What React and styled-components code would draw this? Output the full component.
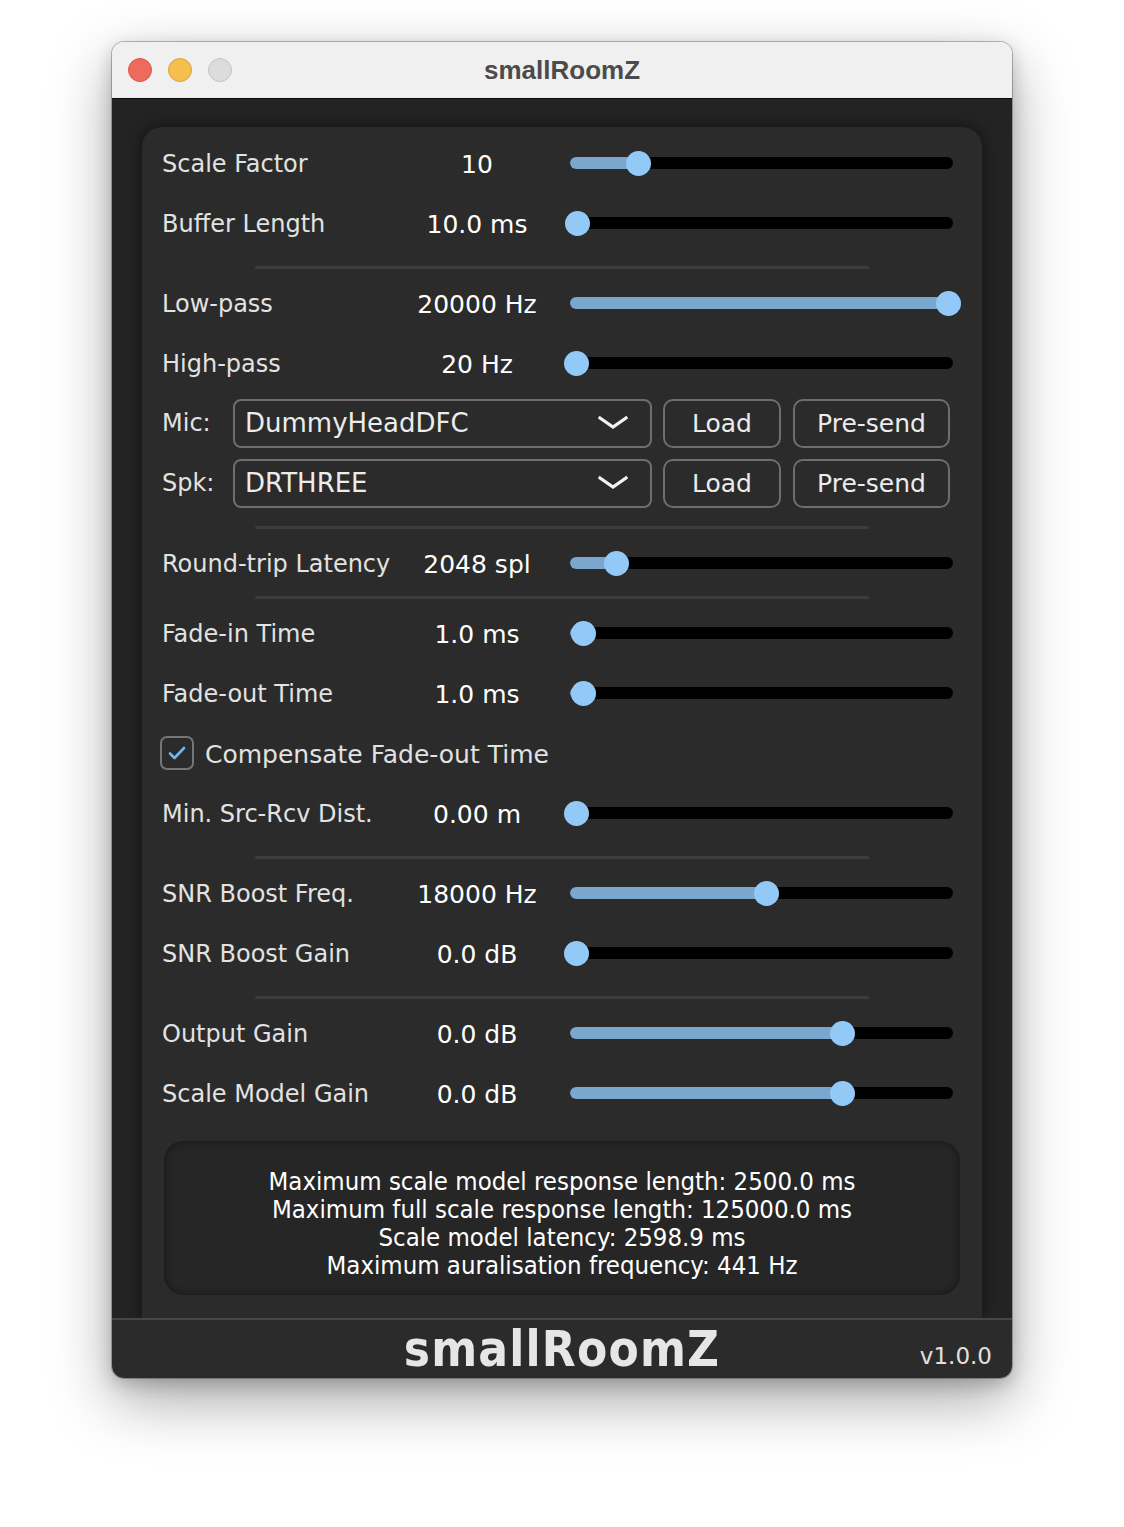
import React from "react";
import styled, { createGlobalStyle } from "styled-components";

const UI_FONT = `"DejaVu Sans", "Liberation Sans", sans-serif`;
const NARROW_FONT = `"DejaVu Sans Condensed", "Liberation Sans Narrow", "Liberation Sans", sans-serif`;

const GlobalStyle = createGlobalStyle`
  html, body {
    margin: 0;
    padding: 0;
    background: #ffffff;
  }
  body {
    font-family: ${UI_FONT};
  }
`;

const Page = styled.div`
  width: 1124px;
  height: 1527px;
  padding: 42px 0 0 112px;
  box-sizing: border-box;
`;

const Window = styled.div`
  width: 900px;
  height: 1336px;
  border-radius: 12px;
  overflow: hidden;
  display: flex;
  flex-direction: column;
  box-shadow: 0 0 0 1px rgba(0, 0, 0, 0.25), 0 22px 60px rgba(0, 0, 0, 0.35),
    0 6px 18px rgba(0, 0, 0, 0.2);
`;

const TitleBar = styled.div`
  height: 56px;
  flex: none;
  background: #f0f0f0;
  border-bottom: 1px solid #0d0d0d;
  display: flex;
  align-items: center;
  position: relative;
  padding-left: 16px;
  gap: 16px;
`;

const Light = styled.span`
  width: 24px;
  height: 24px;
  border-radius: 50%;
  box-sizing: border-box;
  background: ${(p) => p.$color};
  border: 1px solid ${(p) => p.$edge};
`;

const TitleText = styled.div`
  position: absolute;
  left: 0;
  right: 0;
  top: 0;
  bottom: 0;
  display: flex;
  align-items: center;
  justify-content: center;
  font-family: "Liberation Sans", sans-serif;
  font-weight: bold;
  font-size: 26px;
  color: #4b4b4b;
  pointer-events: none;
`;

const Body = styled.div`
  flex: 1;
  background: #232323;
  padding: 28px 30px 0;
  display: flex;
  flex-direction: column;
`;

const Panel = styled.div`
  flex: 1;
  background: #2b2b2b;
  border-radius: 20px 20px 0 0;
  box-shadow: 0 0 14px rgba(0, 0, 0, 0.55);
  padding: 6px 0 22px;
  display: flex;
  flex-direction: column;
`;

const Row = styled.div`
  height: 60px;
  display: grid;
  grid-template-columns: 230px 178px 383px;
  align-items: center;
  padding-left: 20px;
`;

const Label = styled.div`
  font-size: ${(p) => p.$size || 24}px;
  color: #e2e2e2;
  white-space: nowrap;
  padding-top: 2px;
`;

const Value = styled.div`
  font-size: 25px;
  color: #ffffff;
  text-align: center;
  white-space: nowrap;
  padding: 2px 8px 0 0;
`;

const Separator = styled.div`
  height: 3px;
  margin: ${(p) => p.$top}px 113px 4px;
  background: #3d3d3d;
  border-radius: 2px;
`;

const Track = styled.div`
  position: relative;
  height: 12px;
  border-radius: 6px;
  background: #000000;
`;

const Fill = styled.div`
  position: absolute;
  left: 0;
  top: 0;
  bottom: 0;
  border-radius: 6px;
  background: #7ba7cf;
`;

const Thumb = styled.div`
  position: absolute;
  top: 50%;
  width: 25px;
  height: 25px;
  margin: -12.5px 0 0 -12.5px;
  border-radius: 50%;
  background: #92c9f7;
`;

const Slider = ({ at }) => (
  <Track>
    <Fill style={{ width: at }} />
    <Thumb style={{ left: at }} />
  </Track>
);

const SliderRow = ({ label, value, at }) => (
  <Row>
    <Label>{label}</Label>
    <Value>{value}</Value>
    <Slider at={at} />
  </Row>
);

const ChooserRow = styled.div`
  height: 60px;
  display: flex;
  align-items: center;
  padding-left: 20px;
`;

const ChooserLabel = styled.div`
  width: 71px;
  font-size: 24px;
  color: #e2e2e2;
`;

const Combo = styled.div`
  width: 419px;
  height: 49px;
  box-sizing: border-box;
  border: 2px solid #6e6e6e;
  border-radius: 8px;
  display: flex;
  align-items: center;
  justify-content: space-between;
  padding: 0 22px 0 10px;
  font-size: 26px;
  color: #ececec;
  margin-right: 11px;
`;

const Button = styled.div`
  width: ${(p) => p.$w}px;
  height: 49px;
  box-sizing: border-box;
  border: 2px solid #6e6e6e;
  border-radius: 10px;
  display: flex;
  align-items: center;
  justify-content: center;
  font-size: 25px;
  color: #ececec;
  margin-right: 12px;
`;

const Chevron = () => (
  <svg width="30" height="16" viewBox="0 0 30 16">
    <path
      d="M2 3 L15 12 L28 3"
      fill="none"
      stroke="#f2f2f2"
      strokeWidth="3.2"
      strokeLinecap="square"
    />
  </svg>
);

const Chooser = ({ label, item }) => (
  <ChooserRow>
    <ChooserLabel>{label}</ChooserLabel>
    <Combo>
      <span>{item}</span>
      <Chevron />
    </Combo>
    <Button $w={118}>Load</Button>
    <Button $w={157}>Pre-send</Button>
  </ChooserRow>
);

const CheckRow = styled.div`
  height: 60px;
  display: flex;
  align-items: center;
  padding-left: 18px;
  gap: 11px;
`;

const Box = styled.div`
  width: 34px;
  height: 34px;
  box-sizing: border-box;
  border: 2px solid #767676;
  border-radius: 7px;
  display: flex;
  align-items: center;
  justify-content: center;
`;

const InfoBox = styled.div`
  margin: 18px 22px 0;
  height: 154px;
  border-radius: 20px;
  background: #262626;
  box-shadow: inset 0 0 8px rgba(0, 0, 0, 0.45);
  display: flex;
  flex-direction: column;
  align-items: center;
  justify-content: center;
  padding-top: 10px;
  box-sizing: border-box;
`;

const InfoLine = styled.div`
  font-family: ${NARROW_FONT};
  font-size: 25.5px;
  line-height: 28px;
  color: #ffffff;
  white-space: nowrap;
`;

const Footer = styled.div`
  height: 58px;
  flex: none;
  background: #2b2b2b;
  border-top: 2px solid #474747;
  position: relative;
  display: flex;
  align-items: center;
  justify-content: center;
`;

const Brand = styled.div`
  font-family: ${NARROW_FONT};
  font-weight: bold;
  font-size: 49px;
  letter-spacing: 1.2px;
  color: #e6e6e6;
  line-height: 54px;
  margin-top: 2px;
`;

const Version = styled.div`
  position: absolute;
  right: 20px;
  bottom: 9px;
  font-size: 23px;
  color: #e0e0e0;
`;

// thumb centre in px along the 383px track
const pos = (c) => `${c - 570}px`;

export default function App() {
  return (
    <Page>
      <GlobalStyle />
      <Window>
        <TitleBar>
          <Light $color="#ee6a5f" $edge="#d5564b" />
          <Light $color="#f5bf4f" $edge="#d9a23a" />
          <Light $color="#dcdcdc" $edge="#c4c4c4" />
          <TitleText>smallRoomZ</TitleText>
        </TitleBar>
        <Body>
          <Panel>
            <SliderRow label="Scale Factor" value="10" at={pos(638)} />
            <SliderRow label="Buffer Length" value="10.0 ms" at={pos(577)} />
            <Separator $top={13} />
            <SliderRow label="Low-pass" value="20000 Hz" at={pos(948)} />
            <SliderRow label="High-pass" value="20 Hz" at={pos(576)} />
            <Chooser label="Mic:" item="DummyHeadDFC" />
            <Chooser label="Spk:" item="DRTHREE" />
            <Separator $top={13} />
            <SliderRow label="Round-trip Latency" value="2048 spl" at={pos(616)} />
            <Separator $top={3} />
            <SliderRow label="Fade-in Time" value="1.0 ms" at={pos(583)} />
            <SliderRow label="Fade-out Time" value="1.0 ms" at={pos(583)} />
            <CheckRow>
              <Box>
                <svg width="18" height="14" viewBox="0 0 18 14">
                  <path
                    d="M2 7.5 L6.5 12 L16 2"
                    fill="none"
                    stroke="#6cb6f2"
                    strokeWidth="2.6"
                    strokeLinecap="round"
                    strokeLinejoin="round"
                  />
                </svg>
              </Box>
              <Label $size={25}>Compensate Fade-out Time</Label>
            </CheckRow>
            <SliderRow label="Min. Src-Rcv Dist." value="0.00 m" at={pos(576)} />
            <Separator $top={13} />
            <SliderRow label="SNR Boost Freq." value="18000 Hz" at={pos(766)} />
            <SliderRow label="SNR Boost Gain" value="0.0 dB" at={pos(576)} />
            <Separator $top={13} />
            <SliderRow label="Output Gain" value="0.0 dB" at={pos(842)} />
            <SliderRow label="Scale Model Gain" value="0.0 dB" at={pos(842)} />
            <InfoBox>
              <InfoLine>Maximum scale model response length: 2500.0 ms</InfoLine>
              <InfoLine>Maximum full scale response length: 125000.0 ms</InfoLine>
              <InfoLine>Scale model latency: 2598.9 ms</InfoLine>
              <InfoLine>Maximum auralisation frequency: 441 Hz</InfoLine>
            </InfoBox>
          </Panel>
        </Body>
        <Footer>
          <Brand>smallRoomZ</Brand>
          <Version>v1.0.0</Version>
        </Footer>
      </Window>
    </Page>
  );
}
